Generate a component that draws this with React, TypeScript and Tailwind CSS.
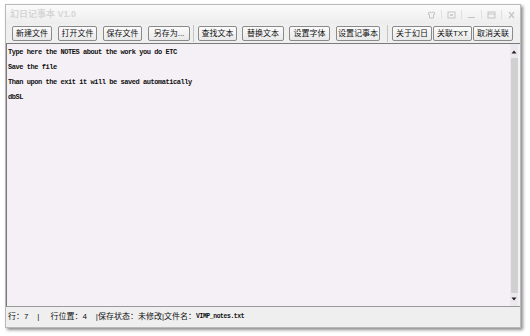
import React from "react";

const Btn = ({ label, cls }: { label: string; cls: string }) => (
  <div
    className={`${cls} h-[15px] shrink-0 flex items-center justify-center whitespace-nowrap rounded-[2px] border border-[#8a8a8a] bg-gradient-to-b from-[#fbfbfb] to-[#e9e9e9] text-[8px] text-[#111] leading-none`}
  >
    {label}
  </div>
);

const Sep = ({ cls }: { cls: string }) => <div className={`${cls} w-px h-[17px] shrink-0 bg-[#c4c4c4]`} />;

const App = () => {
  return (
    <div className="w-[530px] h-[336px] bg-white relative font-['Liberation_Sans','Noto_Sans_CJK_SC',sans-serif]">
      <div className="absolute left-[5px] top-[4px] w-[516px] h-[324px] flex flex-col bg-[#efefef] border border-[#b9b9b9] shadow-[2px_2px_3px_rgba(0,0,0,0.45)]">
        {/* title bar */}
        <div className="h-[19px] shrink-0 flex items-center justify-between pl-[4px] pr-[4px] bg-gradient-to-b from-[#fbfbfb] to-[#ededed]">
          <span className="text-[9px] font-bold text-[#d6d6d6]">幻日记事本 V1.0</span>
          <div className="flex items-center gap-[5px]">
            <svg width="9" height="8" viewBox="0 0 9 8">
              <path d="M1 2 L3 1 Q4.5 2.5 6 1 L8 2 L7 4 L6.5 3.5 L6.5 7 L2.5 7 L2.5 3.5 L2 4 Z" fill="none" stroke="#c4c4c4" strokeWidth="1" />
            </svg>
            <div className="w-px h-[9px] bg-[#e0e0e0]" />
            <svg width="9" height="8" viewBox="0 0 9 8">
              <rect x="1" y="1" width="7" height="6" fill="none" stroke="#c4c4c4" />
              <rect x="3" y="3" width="3" height="2" fill="#cfcfcf" />
            </svg>
            <div className="w-px h-[9px] bg-[#e0e0e0]" />
            <svg width="9" height="8" viewBox="0 0 9 8">
              <line x1="1" y1="6.5" x2="8" y2="6.5" stroke="#c4c4c4" />
            </svg>
            <div className="w-px h-[9px] bg-[#e0e0e0]" />
            <svg width="9" height="8" viewBox="0 0 9 8">
              <rect x="1" y="1" width="7" height="6" fill="none" stroke="#c4c4c4" />
              <line x1="1" y1="3" x2="8" y2="3" stroke="#c4c4c4" />
            </svg>
            <div className="w-px h-[9px] bg-[#e0e0e0]" />
            <svg width="9" height="8" viewBox="0 0 9 8">
              <path d="M2 1 L7 7 M7 1 L2 7" stroke="#c4c4c4" strokeWidth="1.2" />
            </svg>
          </div>
        </div>

        {/* toolbar */}
        <div className="h-[19px] shrink-0 flex items-center pl-[6px]">
          <Btn label="新建文件" cls="w-[40px]" />
          <Btn label="打开文件" cls="w-[39px] ml-[6px]" />
          <Btn label="保存文件" cls="w-[39px] ml-[6px]" />
          <Btn label="另存为..." cls="w-[42px] ml-[6px]" />
          <Sep cls="ml-[3px]" />
          <Btn label="查找文本" cls="w-[39px] ml-[4px]" />
          <Btn label="替换文本" cls="w-[42px] ml-[5px]" />
          <Btn label="设置字体" cls="w-[41px] ml-[5px]" />
          <Btn label="设置记事本" cls="w-[44px] ml-[6px]" />
          <Sep cls="ml-[7px]" />
          <Btn label="关于幻日" cls="w-[40px] ml-[4px]" />
          <Btn label="关联TXT" cls="w-[39px] ml-[1px]" />
          <Btn label="取消关联" cls="w-[40px] ml-[1px]" />
        </div>

        {/* editor */}
        <div className="h-[264px] shrink-0 flex border-t border-l border-[#7a7a7a] border-b border-b-[#9a9a9a] bg-[#f4f0f5]">
          <div className="flex-1 pl-[1px] pt-[4px] flex flex-col gap-[7px] font-['Liberation_Mono','Noto_Sans_CJK_SC',monospace] text-[7px] tracking-[-0.45px] font-bold leading-[8px] text-[#111]">
            <div>Type here the NOTES about the work you do ETC</div>
            <div>Save the file</div>
            <div>Than upon the exit it will be saved automatically</div>
            <div>dbSL</div>
          </div>
          <div className="w-[8px] flex flex-col items-center bg-[#ece9ee] mr-[2px]">
            <svg width="8" height="8" viewBox="0 0 8 8" className="mt-[4px]">
              <path d="M1.5 5.5 L4 2.5 L6.5 5.5 Z" fill="#222" />
            </svg>
            <div className="w-[7px] flex-1 mt-[2px] mb-[2px] rounded-[1px] bg-[#d0d0d0]" />
            <svg width="8" height="8" viewBox="0 0 8 8" className="mb-[3px]">
              <path d="M1.5 2.5 L4 5.5 L6.5 2.5 Z" fill="#222" />
            </svg>
          </div>
        </div>

        {/* status bar */}
        <div className="flex-1 flex items-center pl-[2px] text-[8px] text-[#111] whitespace-pre">
          <span>行：7    |     行位置：4    |保存状态：未修改|文件名：</span>
          <span className="font-['Liberation_Mono',monospace] text-[6.4px] tracking-[-0.4px] font-bold">VIMP_notes.txt</span>
        </div>
      </div>
    </div>
  );
};

export default App;
